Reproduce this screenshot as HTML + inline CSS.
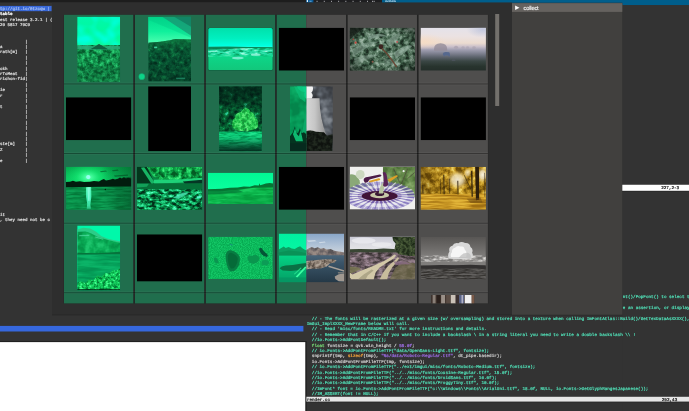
<!DOCTYPE html>
<html lang="en"><head><meta charset="utf-8"><title>screenshot</title>
<style>
html,body{margin:0;padding:0}
body{width:689px;height:411px;overflow:hidden;position:relative;background:#333333;font-family:"Liberation Mono",monospace;}
#bg{position:absolute;left:0;top:0;display:block}
#tx{position:absolute;left:0;top:0;width:689px;height:411px;will-change:transform}
.a{position:absolute}
.t{position:absolute;white-space:pre;font-size:4.29px;line-height:5.4px;font-family:"Liberation Mono",monospace;text-rendering:geometricPrecision;-webkit-text-stroke:0.22px;}
.u{font-size:4.18px}
</style></head>
<body>
<svg id="bg" width="689" height="411" viewBox="0 0 689 411">
<rect x="0.00" y="0.00" width="306.30" height="2.40" fill="#1d1d1d" />
<rect x="306.20" y="0.00" width="77.00" height="2.40" fill="#1e1e20" />
<rect x="382.00" y="0.00" width="307.00" height="2.70" fill="#005e8c" />
<rect x="622.30" y="0.00" width="66.70" height="5.20" fill="#005e8c" />
<rect x="622.30" y="5.20" width="66.70" height="406.00" fill="#333333" />
<rect x="0.00" y="325.90" width="303.40" height="5.60" fill="#3668de" />
<rect x="0.00" y="342.00" width="305.50" height="69.00" fill="#ffffff" />
<rect x="0.00" y="341.20" width="306.30" height="0.90" fill="#1c1c1c" />
<rect x="305.50" y="341.20" width="1.20" height="70.00" fill="#202020" />
<rect x="52.00" y="2.60" width="460.00" height="312.30" fill="#2e2e2e" />
<rect x="52.00" y="314.50" width="570.30" height="0.80" fill="#262626" />
<rect x="512.00" y="3.20" width="110.30" height="311.50" fill="#41403e" />
<rect x="512.00" y="3.20" width="110.30" height="8.70" fill="#65625f" />
<rect x="622.30" y="184.00" width="66.70" height="7.40" fill="#222222" />
<rect x="622.30" y="184.70" width="66.70" height="6.10" fill="#ffffff" />
<rect x="306.40" y="396.00" width="382.60" height="6.20" fill="#1c1c1c" />
<rect x="306.40" y="396.70" width="382.60" height="4.90" fill="#e6e6e6" />
<rect x="306.10" y="0.00" width="7.30" height="2.40" fill="#0a5a96" />
<rect x="306.80" y="0.10" width="1.20" height="1.90" fill="#f0f4f8" />
<rect x="309.40" y="0.70" width="2.20" height="1.20" fill="#5a9ccc" />
<rect x="316.60" y="0.80" width="0.90" height="1.10" fill="#b8b8bc" />
<rect x="323.80" y="0.80" width="0.90" height="1.10" fill="#b8b8bc" />
<rect x="331.00" y="0.80" width="0.90" height="1.10" fill="#b8b8bc" />
<rect x="338.20" y="0.80" width="0.90" height="1.10" fill="#b8b8bc" />
<rect x="345.40" y="0.80" width="0.90" height="1.10" fill="#b8b8bc" />
<rect x="352.60" y="0.80" width="0.90" height="1.10" fill="#b8b8bc" />
<rect x="359.80" y="0.80" width="0.90" height="1.10" fill="#b8b8bc" />
<rect x="367.00" y="0.80" width="0.90" height="1.10" fill="#b8b8bc" />
<rect x="372.00" y="0.80" width="0.90" height="1.10" fill="#b8b8bc" />
<rect x="373.60" y="0.80" width="1.00" height="1.10" fill="#b8b8bc" />
<rect x="63.70" y="14.80" width="424.50" height="288.60" fill="#232323" />
<rect x="64.00" y="14.80" width="69.30" height="288.60" fill="#206e4d" />
<rect x="134.92" y="14.80" width="69.30" height="288.60" fill="#206e4d" />
<rect x="205.84" y="14.80" width="69.30" height="288.60" fill="#206e4d" />
<rect x="276.76" y="14.80" width="29.49" height="288.60" fill="#206e4d" />
<rect x="306.20" y="14.80" width="39.86" height="288.60" fill="#4f4e4d" />
<rect x="347.68" y="14.80" width="69.30" height="288.60" fill="#4f4e4d" />
<rect x="418.60" y="14.80" width="69.30" height="288.60" fill="#4f4e4d" />
<rect x="64.00" y="82.60" width="423.90" height="0.90" fill="#ffffff" opacity="0.05"/>
<rect x="64.00" y="84.40" width="423.90" height="0.90" fill="#ffffff" opacity="0.05"/>
<rect x="64.00" y="83.40" width="423.90" height="1.10" fill="#000000" opacity="0.3"/>
<rect x="64.00" y="152.20" width="423.90" height="0.90" fill="#ffffff" opacity="0.05"/>
<rect x="64.00" y="154.00" width="423.90" height="0.90" fill="#ffffff" opacity="0.05"/>
<rect x="64.00" y="153.00" width="423.90" height="1.10" fill="#000000" opacity="0.3"/>
<rect x="64.00" y="221.80" width="423.90" height="0.90" fill="#ffffff" opacity="0.05"/>
<rect x="64.00" y="223.60" width="423.90" height="0.90" fill="#ffffff" opacity="0.05"/>
<rect x="64.00" y="222.60" width="423.90" height="1.10" fill="#000000" opacity="0.3"/>
<rect x="64.00" y="291.40" width="423.90" height="0.90" fill="#ffffff" opacity="0.05"/>
<rect x="64.00" y="293.20" width="423.90" height="0.90" fill="#ffffff" opacity="0.05"/>
<rect x="64.00" y="292.20" width="423.90" height="1.10" fill="#000000" opacity="0.3"/>
<rect x="495.20" y="14.00" width="4.00" height="92.00" fill="#73706c" />
<svg x="278.71" y="27.65" width="65.4" height="43.0" viewBox="0 0 65.4 43.0"><defs></defs><rect width="65.4" height="43.0" fill="#000"/></svg>
<svg x="65.95" y="97.25" width="65.4" height="43.0" viewBox="0 0 65.4 43.0"><defs></defs><rect width="65.4" height="43.0" fill="#000"/></svg>
<svg x="148.12" y="86.25" width="42.9" height="65.0" viewBox="0 0 42.9 65.0"><defs></defs><rect width="42.9" height="65.0" fill="#000"/></svg>
<svg x="349.63" y="97.25" width="65.4" height="43.0" viewBox="0 0 65.4 43.0"><defs></defs><rect width="65.4" height="43.0" fill="#000"/></svg>
<svg x="420.55" y="97.25" width="65.4" height="43.0" viewBox="0 0 65.4 43.0"><defs></defs><rect width="65.4" height="43.0" fill="#000"/></svg>
<svg x="278.71" y="166.85" width="65.4" height="43.0" viewBox="0 0 65.4 43.0"><defs></defs><rect width="65.4" height="43.0" fill="#000"/></svg>
<svg x="136.87" y="234.30" width="65.4" height="47.3" viewBox="0 0 65.4 47.3"><defs></defs><rect width="65.4" height="47.3" fill="#000"/></svg>
<svg x="77.20" y="16.65" width="42.9" height="65.0" viewBox="0 0 42.9 65.0"><defs><linearGradient id="g00" x1="0" y1="0" x2="0" y2="1"><stop offset="0" stop-color="#00f8ac"/><stop offset="0.7" stop-color="#00fa9a"/><stop offset="1" stop-color="#0cfa9e"/></linearGradient><linearGradient id="g00d" x1="0" y1="0" x2="0" y2="1"><stop offset="0" stop-color="#000000"/><stop offset="1" stop-color="#000000"/></linearGradient><filter id="x1" x="0" y="0" width="100%" height="100%" color-interpolation-filters="sRGB"><feTurbulence type="fractalNoise" baseFrequency="0.24" numOctaves="4" seed="4"/><feColorMatrix values="1 0 0 0 0 1 0 0 0 0 1 0 0 0 0 0 0 0 0 1"/><feComponentTransfer><feFuncR type="table" tableValues="0.024 0.024 0.024 0.024 0.024 0.024 0.027 0.036 0.046 0.055 0.067 0.079 0.096 0.122 0.147 0.173 0.173 0.173 0.173 0.173 0.173"/><feFuncG type="table" tableValues="0.345 0.345 0.345 0.345 0.345 0.345 0.364 0.410 0.456 0.502 0.550 0.598 0.648 0.699 0.749 0.800 0.800 0.800 0.800 0.800 0.800"/><feFuncB type="table" tableValues="0.173 0.173 0.173 0.173 0.173 0.173 0.183 0.208 0.233 0.259 0.286 0.313 0.344 0.381 0.418 0.455 0.455 0.455 0.455 0.455 0.455"/></feComponentTransfer><feComposite operator="in" in2="SourceGraphic"/></filter><filter id="n2" x="0" y="0" width="100%" height="100%" color-interpolation-filters="sRGB"><feTurbulence type="fractalNoise" baseFrequency="0.07" numOctaves="2" seed="2"/><feColorMatrix values="0 0 0 0 0.000 0 0 0 0 1.000 0 0 0 0 0.863 2.6 0 0 0 -1.1"/><feComposite operator="in" in2="SourceGraphic"/></filter></defs><rect x="0" y="0" width="42.9" height="29" fill="url(#g00)" /><rect x="0" y="0" width="42.9" height="29" filter="url(#n2)"/><rect x="0" y="28.4" width="42.9" height="37" filter="url(#x1)"/><path d="M0 28.8 L10 28.5 L16 29.6 L21.6 27.6 L27 30 L34 28.8 L42.9 29.6 L42.9 32.6 L30 33.2 L14 33 L0 32.4Z" fill="#2aa878" opacity="0.9"/><path d="M13.5 32.4 L19 29 L21.8 27.4 L25 29.2 L31.5 32.8Z" fill="#106242"/><rect x="0" y="50" width="42.9" height="15" fill="#0a4a2c" opacity="0.25"/></svg>
<svg x="148.12" y="16.65" width="42.9" height="65.0" viewBox="0 0 42.9 65.0"><defs><linearGradient id="g10" x1="0" y1="0" x2="0" y2="1"><stop offset="0" stop-color="#00dc8c"/><stop offset="0.55" stop-color="#10f09c"/><stop offset="1" stop-color="#50ffb0"/></linearGradient><linearGradient id="g10b" x1="0" y1="0" x2="0" y2="1"><stop offset="0" stop-color="#14a050" stop-opacity="0.5"/><stop offset="0.3" stop-color="#0c6a3a" stop-opacity="0.15"/><stop offset="0.5" stop-color="#04301e" stop-opacity="0.0"/><stop offset="1" stop-color="#032a1c" stop-opacity="0.4"/></linearGradient><filter id="x3" x="0" y="0" width="100%" height="100%" color-interpolation-filters="sRGB"><feTurbulence type="fractalNoise" baseFrequency="0.22" numOctaves="4" seed="7"/><feColorMatrix values="1 0 0 0 0 1 0 0 0 0 1 0 0 0 0 0 0 0 0 1"/><feComponentTransfer><feFuncR type="table" tableValues="0.012 0.012 0.012 0.012 0.012 0.012 0.015 0.018 0.021 0.024 0.028 0.033 0.037 0.046 0.057 0.068 0.078 0.078 0.078 0.078 0.078"/><feFuncG type="table" tableValues="0.188 0.188 0.188 0.188 0.188 0.188 0.214 0.239 0.265 0.290 0.316 0.341 0.366 0.404 0.450 0.495 0.541 0.541 0.541 0.541 0.541"/><feFuncB type="table" tableValues="0.118 0.118 0.118 0.118 0.118 0.118 0.133 0.149 0.165 0.180 0.192 0.203 0.215 0.233 0.254 0.276 0.298 0.298 0.298 0.298 0.298"/></feComponentTransfer><feComposite operator="in" in2="SourceGraphic"/></filter></defs><rect x="0" y="0" width="42.9" height="27" fill="url(#g10)" /><path d="M14 0 L42.9 0 L42.9 19 Z" fill="#189070" opacity="0.75"/><path d="M26 0 L42.9 0 L42.9 10 Z" fill="#127058" opacity="0.6"/><path d="M0 0 L14 0 L42.9 19 L42.9 21 L0 3Z" fill="#00c080" opacity="0.3"/><clipPath id="c10"><path d="M0 26 L12 25 L22 23.6 L27 22.4 L42.9 22.8 L42.9 65 L0 65Z"/></clipPath><g clip-path="url(#c10)"><rect x="0" y="22" width="42.9" height="43" filter="url(#x3)"/><rect x="0" y="22" width="42.9" height="43" fill="url(#g10b)" /></g><rect x="6" y="30" width="3" height="1.6" fill="#3cd09a"/><rect x="28" y="61" width="9" height="1.5" fill="#1f8a66" opacity="0.8"/></svg>
<svg x="138.2" y="73.1" width="7.2" height="7.2" viewBox="0 0 7.2 7.2"><circle cx="3.6" cy="3.6" r="3.1" fill="#0cd488" stroke="#1a9a68" stroke-width="0.5"/></svg>
<svg x="207.79" y="27.65" width="65.4" height="43.0" viewBox="0 0 65.4 43.0"><defs><linearGradient id="g20" x1="0" y1="0" x2="0" y2="1"><stop offset="0" stop-color="#00e0aa"/><stop offset="0.55" stop-color="#00f0c0"/><stop offset="0.9" stop-color="#00ffe0"/><stop offset="1" stop-color="#28ffe0"/></linearGradient><linearGradient id="g20b" x1="0" y1="0" x2="0" y2="1"><stop offset="0" stop-color="#08d88c"/><stop offset="0.3" stop-color="#0cd88a"/><stop offset="1" stop-color="#12c67a"/></linearGradient><filter id="x4" x="0" y="0" width="100%" height="100%" color-interpolation-filters="sRGB"><feTurbulence type="fractalNoise" baseFrequency="0.12 0.4" numOctaves="3" seed="5"/><feColorMatrix values="1 0 0 0 0 1 0 0 0 0 1 0 0 0 0 0 0 0 0 1"/><feComponentTransfer><feFuncR type="table" tableValues="0.039 0.039 0.039 0.039 0.039 0.039 0.039 0.063 0.086 0.110 0.152 0.193 0.235 0.353 0.471 0.588 0.659 0.659 0.659 0.659 0.659"/><feFuncG type="table" tableValues="0.604 0.604 0.604 0.604 0.604 0.604 0.604 0.685 0.766 0.847 0.868 0.889 0.910 0.932 0.953 0.975 0.988 0.988 0.988 0.988 0.988"/><feFuncB type="table" tableValues="0.376 0.376 0.376 0.376 0.376 0.376 0.376 0.455 0.533 0.612 0.643 0.675 0.706 0.758 0.810 0.863 0.894 0.894 0.894 0.894 0.894"/></feComponentTransfer><feComposite operator="in" in2="SourceGraphic"/></filter></defs><rect width="65.4" height="43.0" rx="1.8" fill="#0e3a2c"/><clipPath id="c20"><rect x="0.5" y="0.4" width="64.4" height="42.2" rx="1.6"/></clipPath><g clip-path="url(#c20)"><rect x="0" y="0" width="65.4" height="20" fill="url(#g20)" /><rect x="0" y="19.5" width="65.4" height="24" fill="url(#g20b)" /><rect x="0" y="20.4" width="65.4" height="8.6" filter="url(#x4)"/><path d="M0 19 L20 18.8 L40 19.4 L65.4 19.4 L65.4 20.2 L40 20.4 L22 21.4 L0 22Z" fill="#0a7a50" opacity="0.85"/><rect x="0" y="27" width="65.4" height="2.4" fill="#0cd88a" opacity="0.6"/><ellipse cx="30" cy="30.4" rx="6" ry="1.4" fill="#8af0d8" opacity="0.85"/><ellipse cx="48" cy="27" rx="5" ry="1.2" fill="#a0f5e0" opacity="0.8"/></g></svg>
<svg x="349.63" y="27.65" width="65.4" height="43.0" viewBox="0 0 65.4 43.0"><defs><radialGradient id="g40" cx="0.5" cy="0.5" r="0.72"><stop offset="0" stop-color="#000000" stop-opacity="0"/><stop offset="0.6" stop-color="#000000" stop-opacity="0.08"/><stop offset="1" stop-color="#000000" stop-opacity="0.6"/></radialGradient><filter id="x5" x="0" y="0" width="100%" height="100%" color-interpolation-filters="sRGB"><feTurbulence type="fractalNoise" baseFrequency="0.2" numOctaves="4" seed="21"/><feColorMatrix values="1 0 0 0 0 1 0 0 0 0 1 0 0 0 0 0 0 0 0 1"/><feComponentTransfer><feFuncR type="table" tableValues="0.118 0.118 0.118 0.118 0.118 0.118 0.152 0.187 0.221 0.266 0.317 0.369 0.432 0.495 0.556 0.611 0.667 0.667 0.667 0.667 0.667"/><feFuncG type="table" tableValues="0.188 0.188 0.188 0.188 0.188 0.188 0.239 0.290 0.340 0.393 0.448 0.502 0.559 0.617 0.671 0.720 0.769 0.769 0.769 0.769 0.769"/><feFuncB type="table" tableValues="0.141 0.141 0.141 0.141 0.141 0.141 0.180 0.220 0.259 0.305 0.357 0.408 0.471 0.535 0.593 0.646 0.698 0.698 0.698 0.698 0.698"/></feComponentTransfer><feComposite operator="in" in2="SourceGraphic"/></filter></defs><rect x="0" y="0" width="65.4" height="43.0" filter="url(#x5)"/><path d="M18 9 Q30 3 38 9 Q28 7.6 19 13Z" fill="#a4c0b0" opacity="0.6"/><path d="M36 14 Q46 6 51 4 Q50 12 40 19Z" fill="#9cb8a8" opacity="0.55"/><path d="M44 25 Q56 16 63 18 Q56 25 46 31Z" fill="#a0bcac" opacity="0.6"/><path d="M2 22 Q14 13 29 14 Q16 20 4 29Z" fill="#98b4a4" opacity="0.5"/><path d="M4 31 Q18 26 30 27 Q18 31 6 37Z" fill="#98b4a4" opacity="0.45"/><path d="M34 32 Q44 30 52 36 Q44 36 36 38Z" fill="#98b4a4" opacity="0.4"/><rect x="0" y="0" width="65.4" height="43.0" fill="url(#g40)" /><path d="M0 0 L15 0 L4 8 L0 12Z" fill="#141a16" opacity="0.7"/><circle cx="31.3" cy="19.1" r="2.4" fill="#3c2420"/><path d="M32.5 21 Q40 28 47 39.5" stroke="#6a4634" stroke-width="1.3" fill="none"/><circle cx="6" cy="15" r="1.1" fill="#c8483c"/><circle cx="3.6" cy="11.6" r="0.8" fill="#b04038"/><circle cx="47.5" cy="14.3" r="0.9" fill="#c85050"/><circle cx="23" cy="34" r="1" fill="#8a5a4a"/></svg>
<svg x="420.55" y="27.65" width="65.4" height="43.0" viewBox="0 0 65.4 43.0"><defs><linearGradient id="g50" x1="0" y1="0" x2="0" y2="1"><stop offset="0" stop-color="#e4e2ea"/><stop offset="0.2" stop-color="#ebe2e2"/><stop offset="0.36" stop-color="#ecdcd0"/><stop offset="0.44" stop-color="#cac0ca"/><stop offset="0.51" stop-color="#a2a0b2"/><stop offset="0.58" stop-color="#868898"/><stop offset="0.68" stop-color="#5e646e"/><stop offset="0.78" stop-color="#3a4644"/><stop offset="0.9" stop-color="#28342e"/><stop offset="1" stop-color="#242e2a"/></linearGradient><radialGradient id="g50b" cx="0.5" cy="0.5" r="0.5"><stop offset="0" stop-color="#f6dcc4" stop-opacity="0.9"/><stop offset="1" stop-color="#f6dcc4" stop-opacity="0"/></radialGradient><radialGradient id="g50c" cx="0.5" cy="0.5" r="0.5"><stop offset="0" stop-color="#b4bcd8" stop-opacity="0.7"/><stop offset="1" stop-color="#b4bcd8" stop-opacity="0"/></radialGradient></defs><rect x="0" y="0" width="65.4" height="43.0" fill="url(#g50)" /><ellipse cx="4" cy="14" rx="22" ry="8" fill="url(#g50b)"/><ellipse cx="62" cy="2" rx="16" ry="8" fill="url(#g50c)"/><path d="M13.5 21 Q13.5 15.6 20 15.5 Q26.5 15.6 26.6 21 L26.6 23 L13.5 23Z" fill="#948c98" opacity="0.8"/><ellipse cx="35.5" cy="19.6" rx="2" ry="1.6" fill="#a8a0ae" opacity="0.7"/><ellipse cx="42.5" cy="19.8" rx="1.6" ry="1.3" fill="#aaa2b0" opacity="0.6"/><ellipse cx="47" cy="19.8" rx="1.4" ry="1.2" fill="#aaa2b0" opacity="0.6"/><ellipse cx="53.5" cy="20" rx="1.8" ry="1.4" fill="#a8a0ae" opacity="0.6"/><path d="M22.2 26.4 Q22.6 24.2 25.4 24.3 L28.6 24.6 Q29.6 25.4 29.4 27.6 L28.8 29.4 L27.6 27.8 L24.4 27.8 L23.6 29.2Z" fill="#52668e" opacity="0.9"/><ellipse cx="33" cy="32.5" rx="2" ry="0.9" fill="#4e545e" opacity="0.8"/></svg>
<svg x="219.04" y="86.25" width="42.9" height="65.0" viewBox="0 0 42.9 65.0"><defs><linearGradient id="g21" x1="0" y1="0" x2="0" y2="1"><stop offset="0" stop-color="#021a14" stop-opacity="0.75"/><stop offset="0.3" stop-color="#021a14" stop-opacity="0.55"/><stop offset="0.5" stop-color="#021a14" stop-opacity="0.1"/><stop offset="1" stop-color="#021a14" stop-opacity="0"/></linearGradient><linearGradient id="g21b" x1="0" y1="0" x2="0" y2="1"><stop offset="0" stop-color="#04241a" stop-opacity="0"/><stop offset="0.3" stop-color="#04241a" stop-opacity="0.1"/><stop offset="0.75" stop-color="#04241a" stop-opacity="0.65"/><stop offset="1" stop-color="#04241a" stop-opacity="0.95"/></linearGradient><filter id="x6" x="0" y="0" width="100%" height="100%" color-interpolation-filters="sRGB"><feTurbulence type="fractalNoise" baseFrequency="0.2" numOctaves="4" seed="41"/><feColorMatrix values="1 0 0 0 0 1 0 0 0 0 1 0 0 0 0 0 0 0 0 1"/><feComponentTransfer><feFuncR type="table" tableValues="0.008 0.008 0.008 0.008 0.008 0.008 0.010 0.012 0.014 0.016 0.021 0.026 0.031 0.039 0.047 0.055 0.116 0.176 0.188 0.188 0.188"/><feFuncG type="table" tableValues="0.149 0.149 0.149 0.149 0.149 0.149 0.188 0.227 0.267 0.306 0.350 0.395 0.439 0.494 0.549 0.604 0.714 0.825 0.847 0.847 0.847"/><feFuncB type="table" tableValues="0.102 0.102 0.102 0.102 0.102 0.102 0.118 0.133 0.149 0.165 0.186 0.207 0.227 0.256 0.285 0.314 0.471 0.627 0.659 0.659 0.659"/></feComponentTransfer><feComposite operator="in" in2="SourceGraphic"/></filter><filter id="x7" x="0" y="0" width="100%" height="100%" color-interpolation-filters="sRGB"><feTurbulence type="fractalNoise" baseFrequency="0.3" numOctaves="3" seed="47"/><feColorMatrix values="1 0 0 0 0 1 0 0 0 0 1 0 0 0 0 0 0 0 0 1"/><feComponentTransfer><feFuncR type="table" tableValues="0.090 0.090 0.090 0.090 0.090 0.090 0.090 0.103 0.116 0.128 0.141 0.194 0.247 0.300 0.353 0.353 0.353 0.353 0.353 0.353 0.353"/><feFuncG type="table" tableValues="0.604 0.604 0.604 0.604 0.604 0.604 0.604 0.649 0.694 0.739 0.784 0.816 0.847 0.878 0.910 0.910 0.910 0.910 0.910 0.910 0.910"/><feFuncB type="table" tableValues="0.235 0.235 0.235 0.235 0.235 0.235 0.235 0.255 0.275 0.294 0.314 0.353 0.392 0.431 0.471 0.471 0.471 0.471 0.471 0.471 0.471"/></feComponentTransfer><feComposite operator="in" in2="SourceGraphic"/></filter><filter id="x8" x="0" y="0" width="100%" height="100%" color-interpolation-filters="sRGB"><feTurbulence type="fractalNoise" baseFrequency="0.1 0.5" numOctaves="3" seed="48"/><feColorMatrix values="1 0 0 0 0 1 0 0 0 0 1 0 0 0 0 0 0 0 0 1"/><feComponentTransfer><feFuncR type="table" tableValues="0.016 0.016 0.016 0.016 0.016 0.016 0.016 0.024 0.031 0.039 0.047 0.069 0.090 0.112 0.133 0.133 0.133 0.133 0.133 0.133 0.133"/><feFuncG type="table" tableValues="0.643 0.643 0.643 0.643 0.643 0.643 0.643 0.690 0.737 0.784 0.831 0.855 0.878 0.902 0.925 0.925 0.925 0.925 0.925 0.925 0.925"/><feFuncB type="table" tableValues="0.353 0.353 0.353 0.353 0.353 0.353 0.353 0.386 0.420 0.453 0.486 0.510 0.533 0.557 0.580 0.580 0.580 0.580 0.580 0.580 0.580"/></feComponentTransfer><feComposite operator="in" in2="SourceGraphic"/></filter></defs><rect x="0" y="0" width="42.9" height="46" filter="url(#x6)"/><rect x="0" y="0" width="42.9" height="46" fill="url(#g21)" /><clipPath id="c21"><path d="M13.5 41 Q11.6 35 16 31 Q17 26.6 22 25.6 Q24.6 21.6 27.4 21.4 Q30 22.4 31.6 25.6 Q35.6 27 36 31 Q40.6 34 38.6 41 Q35 44.6 30 44 L28 45.4 L25 44.4 Q18 45.6 13.5 41Z"/></clipPath><g clip-path="url(#c21)"><rect x="11" y="22" width="30" height="25" filter="url(#x7)"/></g><rect x="26.4" y="42" width="0.9" height="3.6" fill="#0a4a2a"/><rect x="0" y="45.4" width="42.9" height="20" filter="url(#x8)"/><rect x="0" y="45.4" width="42.9" height="19.6" fill="url(#g21b)" /></svg>
<svg x="289.96" y="86.25" width="42.9" height="65.0" viewBox="0 0 42.9 65.0"><defs><linearGradient id="g31t" x1="0" y1="0" x2="1" y2="0"><stop offset="0" stop-color="#a8a8a8"/><stop offset="0.2" stop-color="#d8d8d8"/><stop offset="0.55" stop-color="#c6c6c6"/><stop offset="1" stop-color="#8a8a8a"/></linearGradient><filter id="x9" x="0" y="0" width="100%" height="100%" color-interpolation-filters="sRGB"><feTurbulence type="fractalNoise" baseFrequency="0.07" numOctaves="3" seed="51"/><feColorMatrix values="1 0 0 0 0 1 0 0 0 0 1 0 0 0 0 0 0 0 0 1"/><feComponentTransfer><feFuncR type="table" tableValues="0.180 0.180 0.180 0.180 0.180 0.180 0.180 0.204 0.228 0.252 0.280 0.314 0.347 0.387 0.431 0.475 0.502 0.502 0.502 0.502 0.502"/><feFuncG type="table" tableValues="0.188 0.188 0.188 0.188 0.188 0.188 0.188 0.214 0.241 0.267 0.297 0.333 0.370 0.411 0.455 0.499 0.525 0.525 0.525 0.525 0.525"/><feFuncB type="table" tableValues="0.204 0.204 0.204 0.204 0.204 0.204 0.204 0.232 0.261 0.289 0.322 0.361 0.400 0.442 0.486 0.530 0.557 0.557 0.557 0.557 0.557"/></feComponentTransfer><feComposite operator="in" in2="SourceGraphic"/></filter><filter id="x10" x="0" y="0" width="100%" height="100%" color-interpolation-filters="sRGB"><feTurbulence type="fractalNoise" baseFrequency="0.3" numOctaves="2" seed="52"/><feColorMatrix values="1 0 0 0 0 1 0 0 0 0 1 0 0 0 0 0 0 0 0 1"/><feComponentTransfer><feFuncR type="table" tableValues="0.055 0.055 0.055 0.055 0.055 0.055 0.055 0.063 0.071 0.078 0.086 0.098 0.110 0.122 0.133 0.133 0.133 0.133 0.133 0.133 0.133"/><feFuncG type="table" tableValues="0.071 0.071 0.071 0.071 0.071 0.071 0.071 0.080 0.090 0.100 0.110 0.124 0.137 0.151 0.165 0.165 0.165 0.165 0.165 0.165 0.165"/><feFuncB type="table" tableValues="0.055 0.055 0.055 0.055 0.055 0.055 0.055 0.063 0.071 0.078 0.086 0.096 0.106 0.116 0.125 0.125 0.125 0.125 0.125 0.125 0.125"/></feComponentTransfer><feComposite operator="in" in2="SourceGraphic"/></filter><filter id="x11" x="0" y="0" width="100%" height="100%" color-interpolation-filters="sRGB"><feTurbulence type="fractalNoise" baseFrequency="0.08" numOctaves="3" seed="53"/><feColorMatrix values="1 0 0 0 0 1 0 0 0 0 1 0 0 0 0 0 0 0 0 1"/><feComponentTransfer><feFuncR type="table" tableValues="0.016 0.016 0.016 0.016 0.016 0.016 0.016 0.018 0.020 0.022 0.024 0.029 0.035 0.041 0.047 0.047 0.047 0.047 0.047 0.047 0.047"/><feFuncG type="table" tableValues="0.525 0.525 0.525 0.525 0.525 0.525 0.525 0.545 0.565 0.584 0.604 0.624 0.643 0.663 0.682 0.682 0.682 0.682 0.682 0.682 0.682"/><feFuncB type="table" tableValues="0.298 0.298 0.298 0.298 0.298 0.298 0.298 0.310 0.322 0.333 0.345 0.359 0.373 0.386 0.400 0.400 0.400 0.400 0.400 0.400 0.400"/></feComponentTransfer><feComposite operator="in" in2="SourceGraphic"/></filter><clipPath id="c31l"><rect x="0" y="0" width="16.24" height="65.0"/></clipPath><clipPath id="c31r"><rect x="16.24" y="0" width="26.66" height="65.0"/></clipPath></defs><g clip-path="url(#c31r)"><rect x="0" y="0" width="42.9" height="65.0" filter="url(#x9)"/><path d="M7 0 L22.6 0 Q24 4 21.4 6.5 Q24 9 21.6 12.4 L16 12.4 Q13 9 14.6 6 Q9 5 7 0Z" fill="#f2f2f2"/><path d="M16.2 12 L29.6 12 Q29.4 30 36.8 51 L10.5 52 Q16.6 30 16.2 12Z" fill="url(#g31t)"/><clipPath id="c31t"><path d="M0 50 L8 47 L14 46 Q20 42 26 45.6 L34 46 L37 49.6 L42.9 48 L42.9 65 L0 65Z"/></clipPath><g clip-path="url(#c31t)"><rect x="0" y="44" width="42.9" height="21" filter="url(#x10)"/></g></g><g clip-path="url(#c31l)"><rect x="0" y="0" width="42.9" height="65.0" filter="url(#x11)"/><path d="M7 0 L22.6 0 Q24 4 21.4 6.5 Q24 9 21.6 12.4 L16 12.4 Q13 9 14.6 6 Q9 5 7 0Z" fill="#0cd088"/><path d="M4 0 L12 0 L15 8 L15.4 16 L10 12Z" fill="#0cc47c" opacity="0.6"/><path d="M16.2 12 L29.6 12 Q29.4 30 36.8 51 L10.5 52 Q16.6 30 16.2 12Z" fill="#0caa68"/><path d="M0 50 L3 46 L5 40 L6 46 L8 47 L10 42 L11.4 47 L14 46 L16.4 48 L16.4 65 L0 65Z" fill="#043420"/><path d="M3 48 L5 42 L7 48 L9 50 L10.4 44 L12 50 L13 55 L6 55Z" fill="#10dc84" opacity="0.8"/><rect x="0" y="57" width="17" height="8" fill="#062a1e"/></g></svg>
<svg x="65.95" y="166.85" width="65.4" height="43.0" viewBox="0 0 65.4 43.0"><defs><linearGradient id="g02" x1="0" y1="0" x2="0" y2="1"><stop offset="0" stop-color="#04a84c"/><stop offset="0.5" stop-color="#08c45c"/><stop offset="1" stop-color="#0ad468"/></linearGradient><radialGradient id="g02s" cx="0.5" cy="0.5" r="0.5"><stop offset="0" stop-color="#a0ffe0" stop-opacity="1"/><stop offset="0.12" stop-color="#48ffa0" stop-opacity="0.95"/><stop offset="0.45" stop-color="#18f078" stop-opacity="0.6"/><stop offset="1" stop-color="#0ad468" stop-opacity="0"/></radialGradient><linearGradient id="g02e" x1="0" y1="0" x2="1" y2="0"><stop offset="0" stop-color="#033c1c" stop-opacity="0"/><stop offset="0.55" stop-color="#033c1c" stop-opacity="0"/><stop offset="1" stop-color="#033c1c" stop-opacity="0.45"/></linearGradient><linearGradient id="g02r" x1="0" y1="0" x2="0" y2="1"><stop offset="0" stop-color="#60ffc0"/><stop offset="0.5" stop-color="#50ffc8"/><stop offset="0.85" stop-color="#40e8a8"/><stop offset="1" stop-color="#30c088"/></linearGradient><filter id="x12" x="0" y="0" width="100%" height="100%" color-interpolation-filters="sRGB"><feTurbulence type="fractalNoise" baseFrequency="0.06 0.5" numOctaves="3" seed="61"/><feColorMatrix values="1 0 0 0 0 1 0 0 0 0 1 0 0 0 0 0 0 0 0 1"/><feComponentTransfer><feFuncR type="table" tableValues="0.016 0.016 0.016 0.016 0.016 0.016 0.016 0.020 0.024 0.027 0.031 0.037 0.043 0.049 0.055 0.055 0.055 0.055 0.055 0.055 0.055"/><feFuncG type="table" tableValues="0.478 0.478 0.478 0.478 0.478 0.478 0.478 0.498 0.518 0.537 0.557 0.576 0.596 0.616 0.635 0.635 0.635 0.635 0.635 0.635 0.635"/><feFuncB type="table" tableValues="0.227 0.227 0.227 0.227 0.227 0.227 0.227 0.241 0.255 0.269 0.282 0.296 0.310 0.324 0.337 0.337 0.337 0.337 0.337 0.337 0.337"/></feComponentTransfer><feComposite operator="in" in2="SourceGraphic"/></filter></defs><rect x="0" y="0" width="65.4" height="21" fill="url(#g02)" /><ellipse cx="22.3" cy="10.4" rx="26" ry="17" fill="url(#g02s)"/><circle cx="22.3" cy="10.2" r="2.1" fill="#96fff0"/><path d="M34 4.5 L40 3.6 L41 4.6 L35 5.4Z M46 3.4 L52 2.6 L52.6 3.8 L47 4.4Z M48 8.6 L62 7.6 L62 9 L49 9.8Z M56 11 L65.4 10 L65.4 12.6 L57 12.6Z" fill="#06602c" opacity="0.7"/><rect x="0" y="19.4" width="65.4" height="24" filter="url(#x12)"/><rect x="0" y="0" width="65.4" height="43.0" fill="url(#g02e)" /><path d="M0 15.2 L4 14.8 L7 14 L10 14.8 L14 14.4 L18 15.2 L24 14.8 L28 14.2 L33 14.6 L36 13 L38 12.2 L40 13.6 L44 13 L47 12 L49 12.6 L52 11.8 L54 10.6 L56 11.6 L58 10.4 L60 11.6 L62 11 L65.4 11.6 L65.4 19.6 L40 20 L14 20.2 L0 20.4Z" fill="#021c0e"/><path d="M20 20.4 L25.2 20.2 L25.4 30 L24.4 38 L25 42 L20.8 42 L21.2 37 L20.2 30Z" fill="url(#g02r)" opacity="0.9"/><path d="M21.4 20.4 L24 20.4 L23.6 34 L22.2 34Z" fill="#8cffe0" opacity="0.8"/><circle cx="39.4" cy="22.6" r="0.7" fill="#021c0e"/></svg>
<svg x="136.87" y="166.85" width="65.4" height="43.0" viewBox="0 0 65.4 43.0"><defs><filter id="x13" x="0" y="0" width="100%" height="100%" color-interpolation-filters="sRGB"><feTurbulence type="fractalNoise" baseFrequency="0.2 0.32" numOctaves="4" seed="71"/><feColorMatrix values="1 0 0 0 0 1 0 0 0 0 1 0 0 0 0 0 0 0 0 1"/><feComponentTransfer><feFuncR type="table" tableValues="0.008 0.008 0.008 0.008 0.008 0.008 0.010 0.016 0.021 0.031 0.043 0.055 0.091 0.127 0.184 0.273 0.361 0.361 0.361 0.361 0.361"/><feFuncG type="table" tableValues="0.173 0.173 0.173 0.173 0.173 0.173 0.204 0.282 0.361 0.450 0.547 0.643 0.728 0.812 0.886 0.943 1.000 1.000 1.000 1.000 1.000"/><feFuncB type="table" tableValues="0.094 0.094 0.094 0.094 0.094 0.094 0.111 0.153 0.195 0.243 0.294 0.345 0.424 0.502 0.586 0.677 0.769 0.769 0.769 0.769 0.769"/></feComponentTransfer><feComposite operator="in" in2="SourceGraphic"/></filter><filter id="x14" x="0" y="0" width="100%" height="100%" color-interpolation-filters="sRGB"><feTurbulence type="fractalNoise" baseFrequency="0.2" numOctaves="4" seed="73"/><feColorMatrix values="1 0 0 0 0 1 0 0 0 0 1 0 0 0 0 0 0 0 0 1"/><feComponentTransfer><feFuncR type="table" tableValues="0.016 0.016 0.016 0.016 0.016 0.016 0.016 0.022 0.029 0.035 0.049 0.075 0.100 0.142 0.197 0.251 0.251 0.251 0.251 0.251 0.251"/><feFuncG type="table" tableValues="0.353 0.353 0.353 0.353 0.353 0.353 0.353 0.416 0.479 0.542 0.610 0.682 0.755 0.821 0.881 0.941 0.941 0.941 0.941 0.941 0.941"/><feFuncB type="table" tableValues="0.141 0.141 0.141 0.141 0.141 0.141 0.141 0.172 0.202 0.233 0.267 0.306 0.345 0.393 0.448 0.502 0.502 0.502 0.502 0.502 0.502"/></feComponentTransfer><feComposite operator="in" in2="SourceGraphic"/></filter></defs><rect x="0" y="0" width="65.4" height="43.0" fill="#0a8444" /><path d="M0 0 L10 0 L18 17 L0 17Z" fill="#03361c"/><clipPath id="c12"><path d="M10 0 L65.4 0 L65.4 12 L40 13.4 L22 13 L16 9Z"/></clipPath><g clip-path="url(#c12)"><rect x="10" y="0" width="56" height="14" filter="url(#x14)"/></g><path d="M4 1 L7.4 0.4 L18 15.6 L15 17.6Z" fill="#18b464"/><path d="M17 13 L45 12.4 L65.4 11 L65.4 13.4 L48 15.6 L17 17Z" fill="#1ed278"/><path d="M46 14.6 L65.4 13 L65.4 16.6 L48 17Z" fill="#053624"/><rect x="0" y="16.6" width="65.4" height="6.6" fill="#067038" /><path d="M0 17 L12 17 L10 20 L0 20.6Z" fill="#12a058"/><rect x="0" y="22.4" width="65.4" height="21" filter="url(#x13)"/><path d="M36 31 L46 25.6 L52 26 L42 32Z" fill="#50f0c0" opacity="0.7"/><rect x="60" y="29.6" width="4" height="1.8" fill="#58f0d0"/></svg>
<svg x="207.79" y="172.65" width="65.4" height="31.4" viewBox="0 0 65.4 31.4"><defs><linearGradient id="g22" x1="0" y1="0" x2="0" y2="1"><stop offset="0" stop-color="#00f894"/><stop offset="0.6" stop-color="#0cff9e"/><stop offset="1" stop-color="#38ffa8"/></linearGradient><filter id="x15" x="0" y="0" width="100%" height="100%" color-interpolation-filters="sRGB"><feTurbulence type="fractalNoise" baseFrequency="0.06 0.3" numOctaves="3" seed="81"/><feColorMatrix values="1 0 0 0 0 1 0 0 0 0 1 0 0 0 0 0 0 0 0 1"/><feComponentTransfer><feFuncR type="table" tableValues="0.024 0.024 0.024 0.024 0.024 0.024 0.024 0.029 0.035 0.041 0.047 0.061 0.075 0.088 0.102 0.102 0.102 0.102 0.102 0.102 0.102"/><feFuncG type="table" tableValues="0.604 0.604 0.604 0.604 0.604 0.604 0.604 0.631 0.659 0.686 0.714 0.735 0.757 0.778 0.800 0.800 0.800 0.800 0.800 0.800 0.800"/><feFuncB type="table" tableValues="0.235 0.235 0.235 0.235 0.235 0.235 0.235 0.251 0.267 0.282 0.298 0.316 0.333 0.351 0.369 0.369 0.369 0.369 0.369 0.369 0.369"/></feComponentTransfer><feComposite operator="in" in2="SourceGraphic"/></filter></defs><rect x="0" y="0" width="65.4" height="31.4" fill="url(#g22)" /><clipPath id="c22"><path d="M0 17.2 L20 16.2 L40 14.6 L52 13.4 L65.4 12 L65.4 31.4 L0 31.4Z"/></clipPath><g clip-path="url(#c22)"><rect x="0" y="12" width="65.4" height="20" filter="url(#x15)"/></g><path d="M0 16.6 L14 16 L22 15.2 L30 14.8 L36 13.8 L42 14 L47 12.6 L51 12.8 L51.6 10.6 L52.4 12.6 L55 11.8 L58 10.8 L62 10.4 L65.4 10.8 L65.4 14.6 L56 14.8 L46 15.2 L30 17 L14 18.6 L0 19Z" fill="#067434"/><path d="M0 19 L30 17 L36 19.6 L14 21.6 L0 21.4Z" fill="#06803a" opacity="0.8"/><path d="M0 22 L26 20.4 L65.4 17.6 L65.4 20 L26 22.8 L12 26 L0 27Z" fill="#10c454" opacity="0.5"/><path d="M10 31.4 L24 24 L65.4 21.6 L65.4 31.4Z" fill="#06a040" opacity="0.5"/></svg>
<svg x="349.63" y="166.55" width="65.4" height="43.0" viewBox="0 0 65.4 43.0"><defs><filter id="x16" x="0" y="0" width="100%" height="100%" color-interpolation-filters="sRGB"><feTurbulence type="fractalNoise" baseFrequency="0.12" numOctaves="3" seed="91"/><feColorMatrix values="1 0 0 0 0 1 0 0 0 0 1 0 0 0 0 0 0 0 0 1"/><feComponentTransfer><feFuncR type="table" tableValues="0.306 0.306 0.306 0.306 0.306 0.306 0.306 0.331 0.357 0.382 0.408 0.437 0.467 0.496 0.525 0.525 0.525 0.525 0.525 0.525 0.525"/><feFuncG type="table" tableValues="0.439 0.439 0.439 0.439 0.439 0.439 0.439 0.467 0.494 0.522 0.549 0.576 0.604 0.631 0.659 0.659 0.659 0.659 0.659 0.659 0.659"/><feFuncB type="table" tableValues="0.220 0.220 0.220 0.220 0.220 0.220 0.220 0.241 0.263 0.284 0.306 0.331 0.357 0.382 0.408 0.408 0.408 0.408 0.408 0.408 0.408"/></feComponentTransfer><feComposite operator="in" in2="SourceGraphic"/></filter></defs><rect x="0" y="0" width="65.4" height="43.0" fill="#f0f0ee" /><clipPath id="c42"><path d="M33 0 L65.4 0 L65.4 31 L52 28 L40 23 L34 14Z"/></clipPath><g clip-path="url(#c42)"><rect x="33" y="0" width="33" height="32" filter="url(#x16)"/></g><path d="M50 22 L58 2 M58 12 L65 6 M44 2 L50 16" stroke="#4a3a3a" stroke-width="0.7" fill="none" opacity="0.8"/><path d="M0 8 Q6 6 10 14 Q12 22 6 26 L0 27Z" fill="#8aa878"/><ellipse cx="10.6" cy="8" rx="4.4" ry="4.6" fill="#ccd8c0"/><path d="M8 18 Q18 14 26 20 L24 26 L10 26Z" fill="#7a9a68" opacity="0.85"/><ellipse cx="30" cy="29.6" rx="35" ry="14.5" fill="#7a6cc0" opacity="0.55"/><ellipse cx="30" cy="29.6" rx="28" ry="11" fill="#ececf0" opacity="0.8"/><ellipse cx="30" cy="29.4" rx="22" ry="7.6" fill="#6a4a9a" opacity="0.75"/><g><path d="M44.0 29.1 L65.0 29.4" stroke="#f2f2f0" stroke-width="1.1" opacity="0.75"/><path d="M43.9 29.7 L64.6 31.1" stroke="#5c4aa8" stroke-width="1.1" opacity="0.55"/><path d="M43.5 30.2 L63.9 32.6" stroke="#f2f2f0" stroke-width="1.1" opacity="0.75"/><path d="M43.1 30.6 L62.7 34.2" stroke="#5c4aa8" stroke-width="1.1" opacity="0.55"/><path d="M42.4 31.1 L61.1 35.7" stroke="#f2f2f0" stroke-width="1.1" opacity="0.75"/><path d="M41.6 31.6 L59.1 37.1" stroke="#5c4aa8" stroke-width="1.1" opacity="0.55"/><path d="M40.7 32.0 L56.7 38.4" stroke="#f2f2f0" stroke-width="1.1" opacity="0.75"/><path d="M39.6 32.3 L54.0 39.6" stroke="#5c4aa8" stroke-width="1.1" opacity="0.55"/><path d="M38.4 32.7 L51.0 40.6" stroke="#f2f2f0" stroke-width="1.1" opacity="0.75"/><path d="M37.1 33.0 L47.7 41.5" stroke="#5c4aa8" stroke-width="1.1" opacity="0.55"/><path d="M35.7 33.2 L44.2 42.2" stroke="#f2f2f0" stroke-width="1.1" opacity="0.75"/><path d="M34.2 33.4 L40.6 42.8" stroke="#5c4aa8" stroke-width="1.1" opacity="0.55"/><path d="M32.7 33.5 L36.8 43.2" stroke="#f2f2f0" stroke-width="1.1" opacity="0.75"/><path d="M31.1 33.6 L32.9 43.5" stroke="#5c4aa8" stroke-width="1.1" opacity="0.55"/><path d="M29.6 33.6 L29.0 43.5" stroke="#f2f2f0" stroke-width="1.1" opacity="0.75"/><path d="M28.0 33.6 L25.0 43.4" stroke="#5c4aa8" stroke-width="1.1" opacity="0.55"/><path d="M26.5 33.5 L21.2 43.0" stroke="#f2f2f0" stroke-width="1.1" opacity="0.75"/><path d="M25.0 33.3 L17.5 42.5" stroke="#5c4aa8" stroke-width="1.1" opacity="0.55"/><path d="M23.6 33.1 L13.9 41.9" stroke="#f2f2f0" stroke-width="1.1" opacity="0.75"/><path d="M22.2 32.8 L10.5 41.0" stroke="#5c4aa8" stroke-width="1.1" opacity="0.55"/><path d="M20.9 32.5 L7.4 40.1" stroke="#f2f2f0" stroke-width="1.1" opacity="0.75"/><path d="M19.8 32.2 L4.5 38.9" stroke="#5c4aa8" stroke-width="1.1" opacity="0.55"/><path d="M18.8 31.8 L2.0 37.7" stroke="#f2f2f0" stroke-width="1.1" opacity="0.75"/><path d="M17.9 31.3 L-0.2 36.3" stroke="#5c4aa8" stroke-width="1.1" opacity="0.55"/><path d="M17.2 30.9 L-2.0 34.9" stroke="#f2f2f0" stroke-width="1.1" opacity="0.75"/><path d="M16.7 30.4 L-3.4 33.4" stroke="#5c4aa8" stroke-width="1.1" opacity="0.55"/><path d="M16.3 29.9 L-4.3 31.8" stroke="#f2f2f0" stroke-width="1.1" opacity="0.75"/><path d="M16.0 29.4 L-4.9 30.2" stroke="#5c4aa8" stroke-width="1.1" opacity="0.55"/><path d="M16.0 28.9 L-5.0 28.6" stroke="#f2f2f0" stroke-width="1.1" opacity="0.75"/><path d="M16.1 28.3 L-4.6 26.9" stroke="#5c4aa8" stroke-width="1.1" opacity="0.55"/><path d="M16.5 27.8 L-3.9 25.4" stroke="#f2f2f0" stroke-width="1.1" opacity="0.75"/><path d="M16.9 27.4 L-2.7 23.8" stroke="#5c4aa8" stroke-width="1.1" opacity="0.55"/><path d="M17.6 26.9 L-1.1 22.3" stroke="#f2f2f0" stroke-width="1.1" opacity="0.75"/><path d="M18.4 26.4 L0.9 20.9" stroke="#5c4aa8" stroke-width="1.1" opacity="0.55"/><path d="M19.3 26.0 L3.3 19.6" stroke="#f2f2f0" stroke-width="1.1" opacity="0.75"/><path d="M20.4 25.7 L6.0 18.4" stroke="#5c4aa8" stroke-width="1.1" opacity="0.55"/><path d="M21.6 25.3 L9.0 17.4" stroke="#f2f2f0" stroke-width="1.1" opacity="0.75"/><path d="M22.9 25.0 L12.3 16.5" stroke="#5c4aa8" stroke-width="1.1" opacity="0.55"/><path d="M24.3 24.8 L15.8 15.8" stroke="#f2f2f0" stroke-width="1.1" opacity="0.75"/><path d="M25.8 24.6 L19.4 15.2" stroke="#5c4aa8" stroke-width="1.1" opacity="0.55"/><path d="M27.3 24.5 L23.2 14.8" stroke="#f2f2f0" stroke-width="1.1" opacity="0.75"/><path d="M28.9 24.4 L27.1 14.5" stroke="#5c4aa8" stroke-width="1.1" opacity="0.55"/><path d="M30.4 24.4 L31.0 14.5" stroke="#f2f2f0" stroke-width="1.1" opacity="0.75"/><path d="M32.0 24.4 L35.0 14.6" stroke="#5c4aa8" stroke-width="1.1" opacity="0.55"/><path d="M33.5 24.5 L38.8 15.0" stroke="#f2f2f0" stroke-width="1.1" opacity="0.75"/><path d="M35.0 24.7 L42.5 15.5" stroke="#5c4aa8" stroke-width="1.1" opacity="0.55"/><path d="M36.4 24.9 L46.1 16.1" stroke="#f2f2f0" stroke-width="1.1" opacity="0.75"/><path d="M37.8 25.2 L49.5 17.0" stroke="#5c4aa8" stroke-width="1.1" opacity="0.55"/><path d="M39.1 25.5 L52.6 17.9" stroke="#f2f2f0" stroke-width="1.1" opacity="0.75"/><path d="M40.2 25.8 L55.5 19.1" stroke="#5c4aa8" stroke-width="1.1" opacity="0.55"/><path d="M41.2 26.2 L58.0 20.3" stroke="#f2f2f0" stroke-width="1.1" opacity="0.75"/><path d="M42.1 26.7 L60.2 21.7" stroke="#5c4aa8" stroke-width="1.1" opacity="0.55"/><path d="M42.8 27.1 L62.0 23.1" stroke="#f2f2f0" stroke-width="1.1" opacity="0.75"/><path d="M43.3 27.6 L63.4 24.6" stroke="#5c4aa8" stroke-width="1.1" opacity="0.55"/><path d="M43.7 28.1 L64.3 26.2" stroke="#f2f2f0" stroke-width="1.1" opacity="0.75"/><path d="M44.0 28.6 L64.9 27.8" stroke="#5c4aa8" stroke-width="1.1" opacity="0.55"/></g><ellipse cx="30" cy="29.4" rx="18" ry="5" fill="#401438"/><ellipse cx="30" cy="28.6" rx="9.5" ry="3.1" fill="#c8c8a8"/><ellipse cx="30" cy="27.4" rx="4.6" ry="2.1" fill="#3a1834"/><path d="M29 27 Q30 20 33 16 L36 16 Q34 22 33.4 27Z" fill="#b8c4a0"/><path d="M14 13.6 Q14 10.6 18 10.4 L30 8 Q33 8.2 31 10 L20 13 Q18 17 15 16Z" fill="#4c1c48"/><path d="M19 14.4 L29 11.6 Q31.6 12 30 13.6 L20.4 16Z" fill="#dca028"/><path d="M33 6 Q36 4 37 8 L38.6 18 Q36 22 33.4 19 Q35 12 33 6Z" fill="#5a2458"/><path d="M38 13 L46.6 8.6 Q48.6 8.4 48 10 L40 15.4Z" fill="#dca028"/><circle cx="54" cy="4.6" r="1.1" fill="#f4f4f4"/></svg>
<svg x="420.55" y="166.85" width="65.4" height="43.0" viewBox="0 0 65.4 43.0"><defs><radialGradient id="g52l" cx="0.5" cy="0.5" r="0.5"><stop offset="0" stop-color="#f6f0e0" stop-opacity="1"/><stop offset="0.5" stop-color="#f0e2bc" stop-opacity="0.85"/><stop offset="1" stop-color="#d0a848" stop-opacity="0"/></radialGradient><linearGradient id="g52d" x1="0" y1="0" x2="1" y2="0"><stop offset="0" stop-color="#3a2808" stop-opacity="0.35"/><stop offset="0.5" stop-color="#3a2808" stop-opacity="0.1"/><stop offset="1" stop-color="#3a2808" stop-opacity="0"/></linearGradient><filter id="x17" x="0" y="0" width="100%" height="100%" color-interpolation-filters="sRGB"><feTurbulence type="fractalNoise" baseFrequency="0.16" numOctaves="4" seed="101"/><feColorMatrix values="1 0 0 0 0 1 0 0 0 0 1 0 0 0 0 0 0 0 0 1"/><feComponentTransfer><feFuncR type="table" tableValues="0.416 0.416 0.416 0.416 0.416 0.416 0.444 0.514 0.584 0.644 0.699 0.753 0.792 0.831 0.869 0.905 0.941 0.941 0.941 0.941 0.941"/><feFuncG type="table" tableValues="0.290 0.290 0.290 0.290 0.290 0.290 0.314 0.373 0.431 0.484 0.532 0.580 0.626 0.671 0.720 0.776 0.831 0.831 0.831 0.831 0.831"/><feFuncB type="table" tableValues="0.031 0.031 0.031 0.031 0.031 0.031 0.038 0.055 0.072 0.093 0.117 0.141 0.174 0.208 0.258 0.333 0.408 0.408 0.408 0.408 0.408"/></feComponentTransfer><feComposite operator="in" in2="SourceGraphic"/></filter><filter id="x18" x="0" y="0" width="100%" height="100%" color-interpolation-filters="sRGB"><feTurbulence type="fractalNoise" baseFrequency="0.04 0.6" numOctaves="3" seed="103"/><feColorMatrix values="1 0 0 0 0 1 0 0 0 0 1 0 0 0 0 0 0 0 0 1"/><feComponentTransfer><feFuncR type="table" tableValues="0.627 0.627 0.627 0.627 0.627 0.627 0.627 0.667 0.706 0.745 0.784 0.810 0.835 0.861 0.886 0.886 0.886 0.886 0.886 0.886 0.886"/><feFuncG type="table" tableValues="0.439 0.439 0.439 0.439 0.439 0.439 0.439 0.476 0.514 0.551 0.588 0.618 0.647 0.676 0.706 0.706 0.706 0.706 0.706 0.706 0.706"/><feFuncB type="table" tableValues="0.078 0.078 0.078 0.078 0.078 0.078 0.078 0.094 0.110 0.125 0.141 0.161 0.180 0.200 0.220 0.220 0.220 0.220 0.220 0.220 0.220"/></feComponentTransfer><feComposite operator="in" in2="SourceGraphic"/></filter></defs><rect x="0" y="0" width="65.4" height="28" filter="url(#x17)"/><rect x="0" y="0" width="26" height="28" fill="url(#g52d)" /><ellipse cx="37" cy="13" rx="11" ry="10" fill="url(#g52l)" opacity="0.9"/><ellipse cx="62" cy="8" rx="6" ry="8" fill="url(#g52l)"/><ellipse cx="47" cy="6" rx="4" ry="5" fill="url(#g52l)" opacity="0.7"/><rect x="0" y="27" width="65.4" height="16" filter="url(#x18)"/><g fill="#2c1e0c"><path d="M54.6 0 L58.4 0 L58.6 33 L55.4 33.4Z"/><path d="M50.4 4 L51.8 4 L52.4 30 L51 30Z" opacity="0.85"/><path d="M22.6 8 L23.8 8 L24.2 27.4 L23 27.4Z" opacity="0.8"/><path d="M36.6 14 L37.8 14 L38 27.6 L37 27.6Z" opacity="0.75"/><path d="M1.6 18 L2.8 18 L3 26.6 L1.8 26.6Z" opacity="0.7"/><path d="M28.6 12 L29.4 12 L29.6 27 L28.8 27Z" opacity="0.6"/><path d="M44 8 L50.6 22 L50 23 L43.4 9Z" opacity="0.6"/><path d="M63.6 6 L64.6 6 L64.8 30 L63.8 30Z" opacity="0.55"/><path d="M19.4 12 L20.2 12 L20.4 27 L19.6 27Z" opacity="0.5"/></g><path d="M46 32 L60 31 L62 36 L50 36Z" fill="#6a4814" opacity="0.5"/></svg>
<svg x="77.20" y="225.45" width="42.9" height="65.0" viewBox="0 0 42.9 65.0"><defs><filter id="x19" x="0" y="0" width="100%" height="100%" color-interpolation-filters="sRGB"><feTurbulence type="fractalNoise" baseFrequency="0.12" numOctaves="3" seed="111"/><feColorMatrix values="1 0 0 0 0 1 0 0 0 0 1 0 0 0 0 0 0 0 0 1"/><feComponentTransfer><feFuncR type="table" tableValues="0.016 0.016 0.016 0.016 0.016 0.016 0.016 0.022 0.027 0.033 0.039 0.057 0.075 0.092 0.110 0.110 0.110 0.110 0.110 0.110 0.110"/><feFuncG type="table" tableValues="0.580 0.580 0.580 0.580 0.580 0.580 0.580 0.604 0.627 0.651 0.675 0.698 0.722 0.745 0.769 0.769 0.769 0.769 0.769 0.769 0.769"/><feFuncB type="table" tableValues="0.282 0.282 0.282 0.282 0.282 0.282 0.282 0.296 0.310 0.324 0.337 0.359 0.380 0.402 0.424 0.424 0.424 0.424 0.424 0.424 0.424"/></feComponentTransfer><feComposite operator="in" in2="SourceGraphic"/></filter><filter id="x20" x="0" y="0" width="100%" height="100%" color-interpolation-filters="sRGB"><feTurbulence type="fractalNoise" baseFrequency="0.35" numOctaves="3" seed="112"/><feColorMatrix values="1 0 0 0 0 1 0 0 0 0 1 0 0 0 0 0 0 0 0 1"/><feComponentTransfer><feFuncR type="table" tableValues="0.016 0.016 0.016 0.016 0.016 0.016 0.019 0.029 0.038 0.047 0.068 0.089 0.110 0.167 0.225 0.282 0.282 0.282 0.282 0.282 0.282"/><feFuncG type="table" tableValues="0.478 0.478 0.478 0.478 0.478 0.478 0.505 0.572 0.639 0.706 0.758 0.810 0.863 0.905 0.946 0.988 0.988 0.988 0.988 0.988 0.988"/><feFuncB type="table" tableValues="0.212 0.212 0.212 0.212 0.212 0.212 0.223 0.251 0.278 0.306 0.340 0.374 0.408 0.460 0.512 0.565 0.565 0.565 0.565 0.565 0.565"/></feComponentTransfer><feComposite operator="in" in2="SourceGraphic"/></filter><filter id="x21" x="0" y="0" width="100%" height="100%" color-interpolation-filters="sRGB"><feTurbulence type="fractalNoise" baseFrequency="0.04 0.25" numOctaves="3" seed="113"/><feColorMatrix values="1 0 0 0 0 1 0 0 0 0 1 0 0 0 0 0 0 0 0 1"/><feComponentTransfer><feFuncR type="table" tableValues="0.016 0.016 0.016 0.016 0.016 0.016 0.016 0.018 0.020 0.022 0.024 0.029 0.035 0.041 0.047 0.047 0.047 0.047 0.047 0.047 0.047"/><feFuncG type="table" tableValues="0.573 0.573 0.573 0.573 0.573 0.573 0.573 0.590 0.608 0.625 0.643 0.659 0.675 0.690 0.706 0.706 0.706 0.706 0.706 0.706 0.706"/><feFuncB type="table" tableValues="0.322 0.322 0.322 0.322 0.322 0.322 0.322 0.331 0.341 0.351 0.361 0.373 0.384 0.396 0.408 0.408 0.408 0.408 0.408 0.408 0.408"/></feComponentTransfer><feComposite operator="in" in2="SourceGraphic"/></filter></defs><rect x="0" y="0" width="42.9" height="65.0" fill="#00f8aa" /><path d="M0 4 L6 2.4 L13 3 L19 6.4 L24 10.6 L30 13 L36 14.6 L42.9 15.8 L42.9 29 L0 29Z" fill="#2ccc88"/><clipPath id="c03m"><path d="M0 6.4 L8 5.6 L14 8 L22 12 L30 14.4 L42.9 17.2 L42.9 29 L0 29Z"/></clipPath><g clip-path="url(#c03m)"><rect x="0" y="6" width="42.9" height="23" filter="url(#x19)"/></g><path d="M2 9.6 L12 9.4 L12 10.6 L2 10.8Z M18 11 L26 13.4 L26 14.4 L18 12Z" fill="#50dca4" opacity="0.7"/><path d="M0 27.4 L20 27.8 L32 27 L42.9 26.4 L42.9 29.4 L0 29.6Z" fill="#06743c"/><rect x="0" y="29" width="42.9" height="36" filter="url(#x21)"/><clipPath id="c03"><path d="M0 57 L4 56 L8 57.6 L12 54 L16 55 L20 50 L24 51.6 L28 47.6 L32 48 L36 44.6 L39 45.4 L42.9 42.6 L42.9 65 L0 65Z"/></clipPath><g clip-path="url(#c03)"><rect x="0" y="43" width="42.9" height="22" filter="url(#x20)"/></g><rect x="0" y="63.8" width="42.9" height="1.2" fill="#032014" /></svg>
<svg x="208.19" y="236.65" width="64.6" height="42.4" viewBox="0 0 64.6 42.4"><defs><filter id="x22" x="0" y="0" width="100%" height="100%" color-interpolation-filters="sRGB"><feTurbulence type="fractalNoise" baseFrequency="0.9" numOctaves="2" seed="121"/><feColorMatrix values="1 0 0 0 0 1 0 0 0 0 1 0 0 0 0 0 0 0 0 1"/><feComponentTransfer><feFuncR type="table" tableValues="0.031 0.031 0.031 0.031 0.031 0.031 0.031 0.035 0.039 0.043 0.047 0.057 0.067 0.076 0.086 0.086 0.086 0.086 0.086 0.086 0.086"/><feFuncG type="table" tableValues="0.667 0.667 0.667 0.667 0.667 0.667 0.667 0.682 0.698 0.714 0.729 0.745 0.761 0.776 0.792 0.792 0.792 0.792 0.792 0.792 0.792"/><feFuncB type="table" tableValues="0.322 0.322 0.322 0.322 0.322 0.322 0.322 0.331 0.341 0.351 0.361 0.373 0.384 0.396 0.408 0.408 0.408 0.408 0.408 0.408 0.408"/></feComponentTransfer><feComposite operator="in" in2="SourceGraphic"/></filter></defs><rect x="0" y="0" width="64.6" height="42.4" filter="url(#x22)"/><path d="M17.4 19 Q18 13.4 22.6 13.6 Q28.6 15 31.4 20 Q32.8 27 28.6 32 Q25 36 21.6 34.4 Q17.8 30 17.4 19Z" fill="#087c42"/><path d="M19.6 20 Q20 16 23 16 Q27.6 17.6 29.4 21 Q30 26 27 30 Q24.6 32.6 22.6 31.6 Q19.6 28 19.6 20Z" fill="#056a38"/><path d="M39.4 21 Q40.4 18 43.6 19.4 Q46 17.6 49 18.6 Q52 21 50.6 24 Q47.6 27.4 43.6 27 Q39.4 25.4 39.4 21Z" fill="#0a964e"/><path d="M5.4 22 Q6.6 20 8.6 21.6 Q10.6 24 10 26.4 Q8 27.4 6.4 25.4Z" fill="#0a9650"/><path d="M51 12 Q52 10.4 53.6 11.6 Q55 15 58.6 17 Q60.4 19 58.8 20.4 Q54.6 19.6 52.6 16.6 Q50.6 14 51 12Z" fill="#045636"/><ellipse cx="57" cy="26" rx="3.8" ry="2.6" fill="#0c9c56"/><rect x="21.6" y="7.6" width="3" height="0.9" fill="#1c8a8a" transform="rotate(15 23 8)"/></svg>
<svg x="278.71" y="233.55" width="65.4" height="48.8" viewBox="0 0 65.4 48.8"><defs><linearGradient id="g33s" x1="0" y1="0" x2="0" y2="1"><stop offset="0" stop-color="#88a6c8"/><stop offset="0.6" stop-color="#b6c6d8"/><stop offset="1" stop-color="#d4d8dc"/></linearGradient><linearGradient id="g33w" x1="0" y1="0" x2="0" y2="1"><stop offset="0" stop-color="#4c667a"/><stop offset="0.3" stop-color="#3a5468"/><stop offset="1" stop-color="#243846"/></linearGradient><linearGradient id="g33gs" x1="0" y1="0" x2="0" y2="1"><stop offset="0" stop-color="#00f0a0"/><stop offset="1" stop-color="#08f8a4"/></linearGradient><linearGradient id="g33gw" x1="0" y1="0" x2="0" y2="1"><stop offset="0" stop-color="#04d486"/><stop offset="0.5" stop-color="#04b874"/><stop offset="1" stop-color="#04a066"/></linearGradient><filter id="x23" x="0" y="0" width="100%" height="100%" color-interpolation-filters="sRGB"><feTurbulence type="fractalNoise" baseFrequency="0.3" numOctaves="3" seed="131"/><feColorMatrix values="1 0 0 0 0 1 0 0 0 0 1 0 0 0 0 0 0 0 0 1"/><feComponentTransfer><feFuncR type="table" tableValues="0.353 0.353 0.353 0.353 0.353 0.353 0.353 0.400 0.447 0.494 0.541 0.578 0.616 0.653 0.690 0.690 0.690 0.690 0.690 0.690 0.690"/><feFuncG type="table" tableValues="0.314 0.314 0.314 0.314 0.314 0.314 0.314 0.357 0.400 0.443 0.486 0.525 0.565 0.604 0.643 0.643 0.643 0.643 0.643 0.643 0.643"/><feFuncB type="table" tableValues="0.282 0.282 0.282 0.282 0.282 0.282 0.282 0.322 0.361 0.400 0.439 0.478 0.518 0.557 0.596 0.596 0.596 0.596 0.596 0.596 0.596"/></feComponentTransfer><feComposite operator="in" in2="SourceGraphic"/></filter><filter id="x24" x="0" y="0" width="100%" height="100%" color-interpolation-filters="sRGB"><feTurbulence type="fractalNoise" baseFrequency="0.18" numOctaves="3" seed="132"/><feColorMatrix values="1 0 0 0 0 1 0 0 0 0 1 0 0 0 0 0 0 0 0 1"/><feComponentTransfer><feFuncR type="table" tableValues="0.353 0.353 0.353 0.353 0.353 0.353 0.353 0.384 0.416 0.447 0.478 0.510 0.541 0.573 0.604 0.604 0.604 0.604 0.604 0.604 0.604"/><feFuncG type="table" tableValues="0.337 0.337 0.337 0.337 0.337 0.337 0.337 0.363 0.388 0.414 0.439 0.467 0.494 0.522 0.549 0.549 0.549 0.549 0.549 0.549 0.549"/><feFuncB type="table" tableValues="0.345 0.345 0.345 0.345 0.345 0.345 0.345 0.369 0.392 0.416 0.439 0.459 0.478 0.498 0.518 0.518 0.518 0.518 0.518 0.518 0.518"/></feComponentTransfer><feComposite operator="in" in2="SourceGraphic"/></filter><clipPath id="c33l"><rect x="0" y="0" width="27.49" height="48.8"/></clipPath><clipPath id="c33r"><rect x="27.49" y="0" width="37.91" height="48.8"/></clipPath></defs><g clip-path="url(#c33r)"><rect x="0" y="0" width="65.4" height="22" fill="url(#g33s)" /><path d="M28 7 L36 6.4 L38 7.6 L30 8.4Z M40 8.6 L46 8 L47 9 L41 9.6Z" fill="#dce4ec" opacity="0.7"/><rect x="0" y="21" width="65.4" height="28" fill="url(#g33w)" /><clipPath id="c33m"><path d="M0 16 L3 14.2 L5 13 L7 14.4 L10 13.4 L13 15 L16 15.4 L19 13.8 L21.4 12.8 L24 15 L27 16.6 L30 15 L33 13.4 L36 14.6 L39 13.6 L42 15.2 L45 14.4 L48 16 L52 15.4 L55 17 L58 17.8 L62 18.2 L65.4 19 L65.4 22 L0 22Z"/></clipPath><g clip-path="url(#c33m)"><rect x="0" y="9" width="65.4" height="14" filter="url(#x24)"/></g><clipPath id="c33p"><path d="M2 34.5 Q3 32 8 31.4 L14 30.6 L20 28.8 L27 27.6 L33 27 L40 26.2 L47 25.8 L54 25.6 L58 26.6 L56 29 L51 30 L48 33 L42 35 L30 35.4 L22 37 L12 38 L5 37.4Z"/></clipPath><g clip-path="url(#c33p)"><rect x="0" y="23" width="60" height="14" filter="url(#x23)"/></g><path d="M50 32 L65.4 36.8 L65.4 38.2 L49.6 33.4Z" fill="#a8a098"/><path d="M56 43 L60 40.6 L65.4 40 L65.4 48 L60 47.6 L56.6 45.4Z" fill="#a09890"/><path d="M59 38.8 L65.4 38.6 L65.4 40 L59.6 40Z" fill="#8a8680"/></g><g clip-path="url(#c33l)"><rect x="0" y="0" width="65.4" height="22" fill="url(#g33gs)" /><rect x="0" y="21" width="65.4" height="28" fill="url(#g33gw)" /><path d="M0 16 L3 14.2 L5 13 L7 14.4 L10 13.4 L13 15 L16 15.4 L19 13.8 L21.4 12.8 L24 15 L27 16.6 L30 15 L33 13.4 L36 14.6 L39 13.6 L42 15.2 L45 14.4 L48 16 L52 15.4 L55 17 L58 17.8 L62 18.2 L65.4 19 L65.4 22 L0 22Z" fill="#0c9e62"/><path d="M0 19 L10 17 L20 18 L27.6 19.6 L27.6 22 L0 22Z" fill="#088a50" opacity="0.6"/><path d="M1 35 Q2 32.6 7 32 L14 31.4 L20 30.4 L27.6 29.4 L27.6 35 L22 36.4 L12 37.4 L4 37Z" fill="#0a7044"/><path d="M26.4 33 L28 33.6 L18.6 44 L17 43.2Z" fill="#3cffa4"/><path d="M22 34 L23 34.4 L16 41 L15.2 40.4Z" fill="#30e894" opacity="0.8"/><rect x="0" y="44" width="28" height="4.8" fill="#069060" opacity="0.6"/></g></svg>
<svg x="349.63" y="236.55" width="65.4" height="43.0" viewBox="0 0 65.4 43.0"><defs><linearGradient id="g43s" x1="0" y1="0" x2="0" y2="1"><stop offset="0" stop-color="#c8c8d4"/><stop offset="0.5" stop-color="#dcdce2"/><stop offset="1" stop-color="#e6e6e8"/></linearGradient><filter id="x25" x="0" y="0" width="100%" height="100%" color-interpolation-filters="sRGB"><feTurbulence type="fractalNoise" baseFrequency="0.14 0.3" numOctaves="4" seed="141"/><feColorMatrix values="1 0 0 0 0 1 0 0 0 0 1 0 0 0 0 0 0 0 0 1"/><feComponentTransfer><feFuncR type="table" tableValues="0.227 0.227 0.227 0.227 0.227 0.227 0.245 0.290 0.335 0.380 0.425 0.471 0.513 0.555 0.599 0.644 0.690 0.690 0.690 0.690 0.690"/><feFuncG type="table" tableValues="0.196 0.196 0.196 0.196 0.196 0.196 0.212 0.251 0.290 0.328 0.364 0.400 0.439 0.478 0.519 0.561 0.604 0.604 0.604 0.604 0.604"/><feFuncB type="table" tableValues="0.196 0.196 0.196 0.196 0.196 0.196 0.215 0.263 0.310 0.353 0.392 0.431 0.477 0.522 0.567 0.613 0.659 0.659 0.659 0.659 0.659"/></feComponentTransfer><feComposite operator="in" in2="SourceGraphic"/></filter><filter id="x26" x="0" y="0" width="100%" height="100%" color-interpolation-filters="sRGB"><feTurbulence type="fractalNoise" baseFrequency="0.3" numOctaves="3" seed="143"/><feColorMatrix values="1 0 0 0 0 1 0 0 0 0 1 0 0 0 0 0 0 0 0 1"/><feComponentTransfer><feFuncR type="table" tableValues="0.118 0.118 0.118 0.118 0.118 0.118 0.118 0.139 0.161 0.182 0.204 0.231 0.259 0.286 0.314 0.314 0.314 0.314 0.314 0.314 0.314"/><feFuncG type="table" tableValues="0.165 0.165 0.165 0.165 0.165 0.165 0.165 0.190 0.216 0.241 0.267 0.296 0.325 0.355 0.384 0.384 0.384 0.384 0.384 0.384 0.384"/><feFuncB type="table" tableValues="0.094 0.094 0.094 0.094 0.094 0.094 0.094 0.112 0.129 0.147 0.165 0.182 0.200 0.218 0.235 0.235 0.235 0.235 0.235 0.235 0.235"/></feComponentTransfer><feComposite operator="in" in2="SourceGraphic"/></filter></defs><rect x="0" y="0" width="65.4" height="15" fill="url(#g43s)" /><ellipse cx="14" cy="4" rx="12" ry="3" fill="#eeeef2" opacity="0.7"/><ellipse cx="32" cy="8" rx="10" ry="2.4" fill="#f0f0f2" opacity="0.6"/><rect x="0" y="14" width="65.4" height="29" filter="url(#x25)"/><path d="M0 12.6 L10 12.4 L24 12.8 L34 12 L44 12.4 L48 13 L48 16 L0 15.6Z" fill="#3a4634"/><clipPath id="c43"><path d="M42.6 0 L65.4 0 L65.4 20 L56 19 L48.6 17.4 L45 12 L46 7 L43.4 4Z"/></clipPath><g clip-path="url(#c43)"><rect x="42.6" y="0" width="23" height="20" filter="url(#x26)"/></g><path d="M40 43 L65.4 43 L65.4 27 L54 25 L46 31Z" fill="#6e6a48" opacity="0.75"/><path d="M0 36 L3 38 L10 34.6 L24 29.2 L34 24.6 L41 20.8 L44.6 18 L46.4 18.6 L44 22 L36 27 L30 31 L26 36 L24 43 L2 43 L0 41Z" fill="#d2c8a8"/><path d="M30 43 L33.6 36 L38 30 L44 25 L48 20.6 L49.6 21.4 L46.6 26 L42.4 31 L39 37 L37.6 43Z" fill="#c8bc9c"/><path d="M8 43 L14 38 L22 33 L24 34 L18 39 L16 43Z" fill="#8a8468" opacity="0.5"/><path d="M0 30 L8 30.6 L12 32.6 L2 36.6 L0 36Z" fill="#7c7a54" opacity="0.8"/><path d="M44 25 L56 25 L62 27.6 L52 28 L46 28.6Z" fill="#8a6c84" opacity="0.8"/></svg>
<svg x="420.65" y="237.00" width="65.2" height="42.4" viewBox="0 0 65.2 42.4"><defs><linearGradient id="g53" x1="0" y1="0" x2="0" y2="1"><stop offset="0" stop-color="#585654"/><stop offset="0.4" stop-color="#6e6c6a"/><stop offset="0.7" stop-color="#82807e"/><stop offset="1" stop-color="#7e7c7a"/></linearGradient><filter id="x27" x="0" y="0" width="100%" height="100%" color-interpolation-filters="sRGB"><feTurbulence type="fractalNoise" baseFrequency="0.1 0.7" numOctaves="3" seed="151"/><feColorMatrix values="1 0 0 0 0 1 0 0 0 0 1 0 0 0 0 0 0 0 0 1"/><feComponentTransfer><feFuncR type="table" tableValues="0.204 0.204 0.204 0.204 0.204 0.204 0.204 0.225 0.247 0.269 0.290 0.316 0.341 0.367 0.392 0.392 0.392 0.392 0.392 0.392 0.392"/><feFuncG type="table" tableValues="0.196 0.196 0.196 0.196 0.196 0.196 0.196 0.218 0.239 0.261 0.282 0.308 0.333 0.359 0.384 0.384 0.384 0.384 0.384 0.384 0.384"/><feFuncB type="table" tableValues="0.184 0.184 0.184 0.184 0.184 0.184 0.184 0.207 0.229 0.252 0.275 0.299 0.324 0.348 0.373 0.373 0.373 0.373 0.373 0.373 0.373"/></feComponentTransfer><feComposite operator="in" in2="SourceGraphic"/></filter><filter id="x28" x="0" y="0" width="100%" height="100%" color-interpolation-filters="sRGB"><feTurbulence type="fractalNoise" baseFrequency="0.12 0.3" numOctaves="3" seed="152"/><feColorMatrix values="1 0 0 0 0 1 0 0 0 0 1 0 0 0 0 0 0 0 0 1"/><feComponentTransfer><feFuncR type="table" tableValues="0.478 0.478 0.478 0.478 0.478 0.478 0.478 0.478 0.528 0.578 0.627 0.706 0.784 0.863 0.863 0.863 0.863 0.863 0.863 0.863 0.863"/><feFuncG type="table" tableValues="0.471 0.471 0.471 0.471 0.471 0.471 0.471 0.471 0.520 0.570 0.620 0.698 0.776 0.855 0.855 0.855 0.855 0.855 0.855 0.855 0.855"/><feFuncB type="table" tableValues="0.463 0.463 0.463 0.463 0.463 0.463 0.463 0.463 0.512 0.562 0.612 0.690 0.769 0.847 0.847 0.847 0.847 0.847 0.847 0.847 0.847"/></feComponentTransfer><feComposite operator="in" in2="SourceGraphic"/></filter></defs><rect x="0" y="0" width="65.2" height="29" fill="url(#g53)" /><rect x="0" y="18.6" width="65.2" height="6" filter="url(#x28)"/><path d="M28 21.4 Q26.6 17.6 28.8 14.6 Q27.6 10 31.8 8.8 Q33.2 5.4 37.6 6.2 Q40.8 3.8 44.4 6 Q49.2 5.6 49.8 10 Q53 12 51.4 15.8 Q53.4 19 50.6 21.4 Q40 23 28 21.4Z" fill="#d8d8d8"/><path d="M30.4 20 Q29.4 17 31.4 15 Q31 11.4 34.4 10.8 Q36.6 7.8 40 9.6 Q43.6 8.6 44 12.6 Q47 15 45.4 20Z" fill="#f6f6f6"/><path d="M38 21 Q42 15 48 16 Q51 18 50 21Z" fill="#bcbcbc" opacity="0.7"/><rect x="0" y="28.6" width="65.2" height="14" filter="url(#x27)"/><path d="M0 28.8 L20 28 L34 28.2 L50 27.8 L65.2 28.4 L65.2 31.4 L0 31.6Z" fill="#323030"/></svg>
<svg x="431.1" y="295.0" width="43.4" height="8.4" viewBox="0 0 43.4 8.4"><rect x="0" y="0" width="43.4" height="8.6" fill="#3a2e28" /><rect x="1.5" y="0" width="3" height="8.6" fill="#8a8078" /><rect x="6" y="0" width="3" height="8.6" fill="#2a201c" /><rect x="10" y="0" width="4" height="8.6" fill="#9a9088" /><rect x="15" y="0" width="4" height="8.6" fill="#5a4c44" /><rect x="19.6" y="0" width="5" height="8.6" fill="#cac2b8" /><rect x="24.6" y="0" width="3.4" height="8.6" fill="#3a3030" /><rect x="28" y="0" width="5" height="8.6" fill="#5a6488" /><rect x="30.4" y="0" width="1.6" height="8.6" fill="#b0b0c4" /><rect x="33.6" y="0" width="7" height="8.6" fill="#f0f0f0" /><rect x="40.6" y="0" width="2.8" height="8.6" fill="#7a5a48" /></svg>
<rect x="0.00" y="5.90" width="51.60" height="5.30" fill="#3868d8" />
<path d="M515.1 5.6 L519.5 7.85 L515.1 10.1Z" fill="#ffffff"/>
</svg>
<div id="tx">
<div class="t u" style="left:0.00px;top:8.00px;color:#a4bcf0;">tp://git.io/0tzcqw |</div>
<div class="t u" style="left:0.00px;top:13.42px;color:#ffffff;font-weight:bold">table</div>
<div class="t u" style="left:0.00px;top:18.84px;color:#dcdcdc;">est release 3.2.1 | (</div>
<div class="t u" style="left:0.00px;top:24.25px;color:#dcdcdc;">29 5817 79C9</div>
<div class="t u" style="left:0.00px;top:40.51px;color:#dcdcdc;">          |</div>
<div class="t u" style="left:0.00px;top:45.93px;color:#dcdcdc;">a         |</div>
<div class="t u" style="left:0.00px;top:51.34px;color:#dcdcdc;">rath[m]   |</div>
<div class="t u" style="left:0.00px;top:56.76px;color:#dcdcdc;">          |</div>
<div class="t u" style="left:0.00px;top:62.18px;color:#dcdcdc;">          |</div>
<div class="t u" style="left:0.00px;top:67.60px;color:#dcdcdc;">okh       |</div>
<div class="t u" style="left:0.00px;top:73.02px;color:#dcdcdc;">rToMeat   |</div>
<div class="t u" style="left:0.00px;top:78.43px;color:#dcdcdc;">richon-fid|</div>
<div class="t u" style="left:0.00px;top:83.85px;color:#dcdcdc;">          |</div>
<div class="t u" style="left:0.00px;top:89.27px;color:#dcdcdc;">ie        |</div>
<div class="t u" style="left:0.00px;top:94.69px;color:#dcdcdc;">r         |</div>
<div class="t u" style="left:0.00px;top:100.11px;color:#dcdcdc;">          |</div>
<div class="t u" style="left:0.00px;top:105.52px;color:#dcdcdc;">t         |</div>
<div class="t u" style="left:0.00px;top:110.94px;color:#dcdcdc;">          |</div>
<div class="t u" style="left:0.00px;top:116.36px;color:#dcdcdc;">          |</div>
<div class="t u" style="left:0.00px;top:121.78px;color:#dcdcdc;">          |</div>
<div class="t u" style="left:0.00px;top:127.20px;color:#dcdcdc;">          |</div>
<div class="t u" style="left:0.00px;top:132.61px;color:#dcdcdc;">          |</div>
<div class="t u" style="left:0.00px;top:138.03px;color:#dcdcdc;">          |</div>
<div class="t u" style="left:0.00px;top:143.45px;color:#dcdcdc;">ste[m]    |</div>
<div class="t u" style="left:0.00px;top:148.87px;color:#dcdcdc;">Z         |</div>
<div class="t u" style="left:0.00px;top:154.29px;color:#dcdcdc;">          |</div>
<div class="t u" style="left:0.00px;top:159.70px;color:#dcdcdc;">e         |</div>
<div class="t u" style="left:0.00px;top:213.88px;color:#dcdcdc;">it</div>
<div class="t u" style="left:0.00px;top:219.30px;color:#dcdcdc;">, they need not be c</div>
<div class="t" style="left:622.80px;top:294.90px;color:#50dcb4;">nt()/PopFont() to select t</div>
<div class="t" style="left:622.80px;top:305.70px;color:#50dcb4;">e an assertion, or display</div>
<div class="t" style="left:306.70px;top:316.50px;color:#50dcb4;">  // - The fonts will be rasterized at a given size (w/ oversampling) and stored into a texture when calling ImFontAtlas::Build()/GetTexDataAsXXXX(),</div>
<div class="t" style="left:306.70px;top:321.90px;color:#50dcb4;">ImGui_ImplXXXX_NewFrame below will call.</div>
<div class="t" style="left:306.70px;top:327.30px;color:#50dcb4;">  // - Read 'misc/fonts/README.txt' for more instructions and details.</div>
<div class="t" style="left:306.70px;top:332.70px;color:#50dcb4;">  // - Remember that in C/C++ if you want to include a backslash \ in a string literal you need to write a double backslash \\ !</div>
<div class="t" style="left:306.70px;top:338.10px;color:#50dcb4;">  //io.Fonts-&gt;AddFontDefault();</div>
<div class="t" style="left:306.70px;top:343.50px;color:#c8c8c8;">  <span style="color:#78dc78">float</span> fontsize = qvk.win_height / <span style="color:#a070e6">55.0f</span>;</div>
<div class="t" style="left:306.70px;top:348.90px;color:#50dcb4;">  // io.Fonts-&gt;AddFontFromFileTTF("data/OpenSans-Light.ttf", fontsize);</div>
<div class="t" style="left:306.70px;top:354.30px;color:#c8c8c8;">  snprintf(tmp, <span style="color:#f0a03c">sizeof</span>(tmp), <span style="color:#9a6ae0">"%s/data/Roboto-Regular.ttf"</span>, dt_pipe.basedir);</div>
<div class="t" style="left:306.70px;top:359.70px;color:#c8c8c8;">  io.Fonts-&gt;AddFontFromFileTTF(tmp, fontsize);</div>
<div class="t" style="left:306.70px;top:365.10px;color:#50dcb4;">  // io.Fonts-&gt;AddFontFromFileTTF("../ext/imgui/misc/fonts/Roboto-Medium.ttf", fontsize);</div>
<div class="t" style="left:306.70px;top:370.50px;color:#50dcb4;">  //io.Fonts-&gt;AddFontFromFileTTF("../../misc/fonts/Cousine-Regular.ttf", 15.0f);</div>
<div class="t" style="left:306.70px;top:375.90px;color:#50dcb4;">  //io.Fonts-&gt;AddFontFromFileTTF("../../misc/fonts/DroidSans.ttf", 16.0f);</div>
<div class="t" style="left:306.70px;top:381.30px;color:#50dcb4;">  //io.Fonts-&gt;AddFontFromFileTTF("../../misc/fonts/ProggyTiny.ttf", 10.0f);</div>
<div class="t" style="left:306.70px;top:386.70px;color:#50dcb4;">  //ImFont* font = io.Fonts-&gt;AddFontFromFileTTF("c:\\Windows\\Fonts\\ArialUni.ttf", 18.0f, NULL, io.Fonts-&gt;GetGlyphRangesJapanese());</div>
<div class="t" style="left:306.70px;top:392.10px;color:#50dcb4;">  //IM_ASSERT(font != NULL);</div>
<div class="t" style="left:306.90px;top:397.80px;color:#222;">render.cc</div>
<div class="t" style="left:661.80px;top:397.80px;color:#222;">292,43</div>
<div class="t" style="left:661.20px;top:186.10px;color:#222;">227,2-3</div>
<div class="a" style="left:523.6px;top:4.7px;font:5.7px/8px 'Liberation Sans',sans-serif;letter-spacing:-0.17px;color:#f4f4f4;white-space:pre;text-rendering:geometricPrecision;-webkit-text-stroke:0.15px">collect</div>
<div class="a" style="left:385px;top:-0.5px;font:2.7px/3px 'Liberation Sans',sans-serif;color:#a8cce0;white-space:pre;text-rendering:geometricPrecision;-webkit-text-stroke:0.12px">darktable</div>
</div>
</body></html>
